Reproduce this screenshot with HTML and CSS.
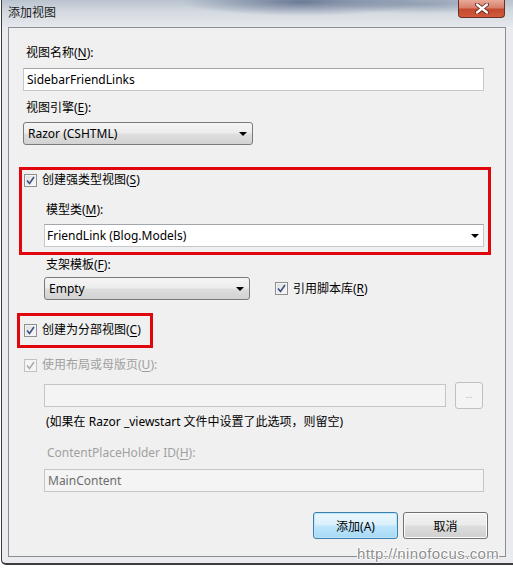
FILE: index.html
```html
<!DOCTYPE html>
<html>
<head>
    <title>添加视图</title>
    <link rel="stylesheet" href="styles.css">
</head>
<body>
    <div class="window">
        <div class="titlebar">
            <span class="title">添加视图</span>
            <div class="close-btn">
                <svg width="14" height="11" viewBox="0 0 14 11">
                    <path d="M2 1.5 L12 9.5 M12 1.5 L2 9.5" stroke="#5a1a12" stroke-width="4" stroke-linecap="round"/>
                    <path d="M2 1.5 L12 9.5 M12 1.5 L2 9.5" stroke="#ffffff" stroke-width="2.4" stroke-linecap="round"/>
                </svg>
            </div>
        </div>

        <div class="panel">
            <div class="label">视图名称(<u>N</u>):</div>
            <div class="textbox name-box">SidebarFriendLinks</div>

            <div class="label engine-label">视图引擎(<u>E</u>):</div>
            <div class="combo engine">Razor (CSHTML)<span class="arrow"></span></div>

            <div class="check strong-check">
                <span class="box"><svg width="9" height="9" viewBox="0 0 9 9"><path d="M1 4.5 L3.5 7.5 L8 1" fill="none" stroke="#3d4f86" stroke-width="1.6"/></svg></span>
                <span>创建强类型视图(<u>S</u>)</span>
            </div>

            <div class="indent">
                <div class="label model-label">模型类(<u>M</u>):</div>
                <div class="textbox model-box">FriendLink (Blog.Models)<span class="arrow"></span></div>

                <div class="label scaffold-label">支架模板(<u>F</u>):</div>
                <div class="scaffold-row">
                    <div class="combo scaffold">Empty<span class="arrow"></span></div>
                    <div class="check script-check">
                        <span class="box"><svg width="9" height="9" viewBox="0 0 9 9"><path d="M1 4.5 L3.5 7.5 L8 1" fill="none" stroke="#3d4f86" stroke-width="1.6"/></svg></span>
                        <span>引用脚本库(<u>R</u>)</span>
                    </div>
                </div>
            </div>

            <div class="check partial-check">
                <span class="box"><svg width="9" height="9" viewBox="0 0 9 9"><path d="M1 4.5 L3.5 7.5 L8 1" fill="none" stroke="#3d4f86" stroke-width="1.6"/></svg></span>
                <span>创建为分部视图(<u>C</u>)</span>
            </div>

            <div class="check disabled layout-check">
                <span class="box"><svg width="9" height="9" viewBox="0 0 9 9"><path d="M1 4.5 L3.5 7.5 L8 1" fill="none" stroke="#a8a8a8" stroke-width="1.4"/></svg></span>
                <span>使用布局或母版页(<u>U</u>):</span>
            </div>

            <div class="indent">
                <div class="layout-row">
                    <div class="textbox off layout-box"></div>
                    <div class="browse">...</div>
                </div>
                <div class="label hint">(如果在 Razor _viewstart 文件中设置了此选项，则留空)</div>
                <div class="label disabled cph-label">ContentPlaceHolder ID(<u>H</u>):</div>
                <div class="textbox off cph-box">MainContent</div>
            </div>

            <div class="actions">
                <button class="btn default">添加(A)</button>
                <button class="btn">取消</button>
            </div>

            <div class="mark mark-strong"></div>
            <div class="mark mark-partial"></div>
        </div>

        <div class="watermark">http://ninofocus.com</div>
    </div>
</body>
</html>
```

FILE: styles.css
```css
body {
    margin: 0;
    background: #ffffff;
    font-family: "Noto Sans", "Noto Sans CJK SC", sans-serif;
    font-size: 12px;
    color: #000;
}
.window {
    position: relative;
    box-sizing: border-box;
    width: 512px;
    height: 565px;
    margin-left: 1px;
    padding: 0 7px 6px 6px;
    border-left: 1px solid #3b3b3b;
    border-bottom: 2px solid #3b3b3b;
    border-bottom-left-radius: 5px;
    background: #e9ebee;
}
.titlebar {
    height: 27px;
    margin: 0 -7px 0 -6px;
    background:
        radial-gradient(ellipse 120px 14px at 300px 2px, rgba(40, 60, 100, 0.55), rgba(40, 60, 100, 0)),
        radial-gradient(ellipse 90px 10px at 420px 4px, rgba(60, 80, 120, 0.35), rgba(60, 80, 120, 0)),
        linear-gradient(to bottom, #b9c3cf 0%, #d4dae1 45%, #e6e9ed 100%);
    position: relative;
}
.title {
    display: block;
    padding: 5px 0 0 6px;
    line-height: 16px;
    color: #1b1b1b;
}
.close-btn {
    position: absolute;
    left: 456px;
    top: 0;
    width: 47px;
    height: 18px;
    box-sizing: border-box;
    border: 1px solid #6d2f25;
    border-top: none;
    border-radius: 0 0 4px 4px;
    background: linear-gradient(to bottom, #e9a99a 0%, #d8806c 45%, #c24a2f 55%, #d2593b 100%);
    display: flex;
    align-items: center;
    justify-content: center;
}
.panel {
    position: relative;
    box-sizing: border-box;
    height: 530px;
    padding: 17px 21px 0 15px;
    border: 1px solid #8a8d91;
    background: #f0f0f0;
}
.label {
    margin-left: 2px;
    line-height: 16px;
    height: 16px;
    white-space: nowrap;
}
u {
    text-decoration-thickness: 1px;
    text-underline-offset: 2px;
}
.textbox {
    position: relative;
    box-sizing: border-box;
    height: 23px;
    line-height: 21px;
    padding-left: 3px;
    border: 1px solid #c4c8cc;
    border-top-color: #a3a6aa;
    background: #ffffff;
    white-space: nowrap;
}
.name-box {
    margin: 7px 0 0 -1px;
}
.engine-label {
    margin-top: 9px;
}
.combo {
    position: relative;
    box-sizing: border-box;
    height: 23px;
    line-height: 21px;
    padding-left: 4px;
    border: 1px solid #7a7a7a;
    border-radius: 3px;
    background: linear-gradient(to bottom, #f5f5f5 0%, #ececec 48%, #dedede 52%, #d2d2d2 100%);
}
.engine {
    width: 230px;
    margin: 6px 0 0 -1px;
}
.arrow {
    position: absolute;
    right: 5px;
    top: 9px;
    width: 0;
    height: 0;
    border-left: 4px solid transparent;
    border-right: 4px solid transparent;
    border-top: 4px solid #000;
}
.check {
    display: flex;
    align-items: center;
    gap: 5px;
    height: 16px;
    line-height: 16px;
    white-space: nowrap;
}
.check .box {
    box-sizing: border-box;
    width: 13px;
    height: 13px;
    border: 1px solid #8e8f8f;
    background: linear-gradient(135deg, #dcdcdc, #fbfbfb);
    box-shadow: inset 0 0 0 1px #f4f4f4;
    display: flex;
    align-items: center;
    justify-content: center;
}
.check.disabled {
    color: #a0a0a0;
}
.check.disabled .box {
    border-color: #c2c2c2;
    background: #f4f4f4;
}
.strong-check {
    margin-top: 27px;
}
.indent {
    padding-left: 20px;
}
.model-label {
    margin-top: 14px;
}
.model-box {
    margin-top: 6px;
    padding-left: 2px;
}
.model-box .arrow {
    right: 4px;
}
.scaffold-label {
    margin-top: 10px;
}
.scaffold-row {
    display: flex;
    align-items: center;
    margin-top: 4px;
}
.scaffold {
    width: 206px;
}
.script-check {
    margin-left: 25px;
}
.partial-check {
    margin-top: 22px;
}
.layout-check {
    margin-top: 19px;
}
.layout-row {
    display: flex;
    align-items: center;
    gap: 9px;
    height: 27px;
    margin-top: 9px;
}
.textbox.off {
    background: #f4f4f4;
    border-color: #c6c6c6;
    color: #6d6d6d;
}
.layout-box {
    width: 402px;
}
.browse {
    box-sizing: border-box;
    width: 28px;
    height: 27px;
    border: 1px solid #c0c0c0;
    border-radius: 3px;
    background: #f4f4f4;
    color: #b0b0b0;
    font-size: 9px;
    text-align: center;
    line-height: 24px;
}
.hint {
    margin-top: 5px;
}
.label.disabled {
    color: #a0a0a0;
    margin-left: 3px;
}
.cph-label {
    margin-top: 15px;
}
.cph-box {
    margin-top: 8px;
}
.actions {
    display: flex;
    justify-content: flex-end;
    gap: 5px;
    margin: 20px -4px 0 0;
}
.btn {
    box-sizing: border-box;
    width: 85px;
    height: 27px;
    padding: 0;
    font-family: "Noto Sans", "Noto Sans CJK SC", sans-serif;
    font-size: 12px;
    color: #000;
    border: 1px solid #707070;
    border-radius: 3px;
    background: linear-gradient(to bottom, #f2f2f2 0%, #ebebeb 48%, #dddddd 52%, #cfcfcf 100%);
    box-shadow: inset 0 0 0 1px #fcfcfc;
}
.btn.default {
    border-color: #3c7fb1;
    background: linear-gradient(to bottom, #eaf6fd 0%, #d9f0fc 48%, #bee6fd 52%, #a7d9f5 100%);
    box-shadow: inset 0 0 0 1px #bfe4f7;
}
.mark {
    position: absolute;
    box-sizing: border-box;
    border: 3px solid #e1060b;
}
.mark-strong {
    left: 10px;
    top: 139px;
    width: 472px;
    height: 88px;
}
.mark-partial {
    left: 8px;
    top: 285px;
    width: 136px;
    height: 35px;
}
.watermark {
    position: absolute;
    left: 355px;
    top: 545px;
    font-family: "Liberation Sans", sans-serif;
    font-size: 15px;
    letter-spacing: 0.4px;
    color: #8f8f8f;
    text-shadow: 1px 0 0 #fff, -1px 0 0 #fff, 0 1px 0 #fff, 0 -1px 0 #fff;
}
```
